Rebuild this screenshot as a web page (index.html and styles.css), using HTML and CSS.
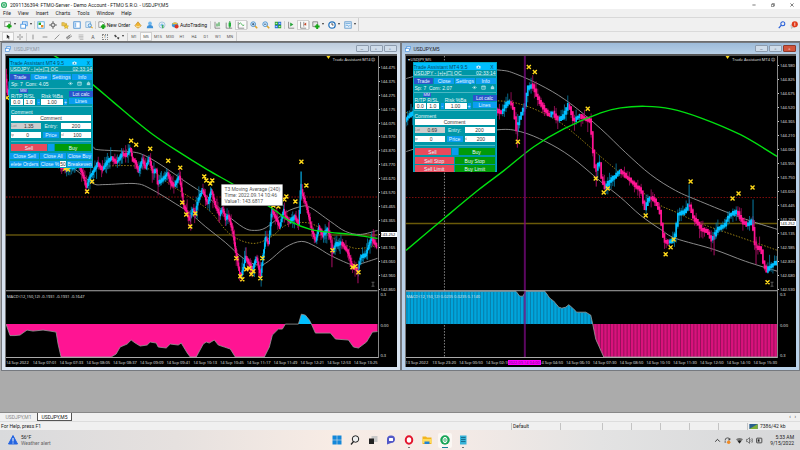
FILE: index.html
```html
<!DOCTYPE html>
<html lang="en">

<head>
    <meta charset="UTF-8">
    <meta name="viewport" content="width=device-width, initial-scale=1.0">
    <title>2091136394: FTMO-Server - Demo Account</title>
    <link rel="stylesheet" href="styles.css">
</head>

<body>
    <!-- shared icons -->
    <svg class="defs" width="0" height="0">
        <symbol id="i-win" viewBox="0 0 10 10"><rect x="3" y="1" width="6" height="5" fill="#dcecff" stroke="#3f8fe0"/><rect x="1" y="4" width="6" height="5" fill="#fff" stroke="#3f8fe0"/></symbol>
        <symbol id="i-bars" viewBox="0 0 10 10"><path d="M2.500 1v8H9" fill="none" stroke="#777"/><path d="M5 3v4M7.500 1.500v5" fill="none" stroke="#2a9b3a" stroke-width="1.300"/></symbol>
        <symbol id="i-cam" viewBox="0 0 10 8"><path d="M1 2h2l1-1h2l1 1h2v5H1z" fill="#dff4fb"/><circle cx="5" cy="4.500" r="1.500" fill="#1a87b0"/></symbol>
        <symbol id="i-eye" viewBox="0 0 10 8"><path d="M1 4q4-5 8 0q-4 5-8 0z" fill="none" stroke="#d9f3f6"/><circle cx="5" cy="4" r="1.300" fill="#d9f3f6"/></symbol>
        <symbol id="i-cal" viewBox="0 0 10 10"><path d="M1.500 2h7v6.500h-7zM1.500 3.500h7M5 6h2" fill="none" stroke="#d9f3f6" stroke-width="1.200"/></symbol>
        <symbol id="i-bell" viewBox="0 0 10 10"><path d="M1.500 7.500h7M2.500 7V4q2.500-4 5 0v3z" fill="#8fd3da" stroke="#d9f3f6"/></symbol>
    </svg>

    <header class="titlebar">
        <svg class="logo" viewBox="0 0 14 14"><circle cx="7" cy="7" r="7" fill="#12a150"/><path d="M7 2.500a4 4.500 0 1 0 .1 0M7 4.500v5" fill="none" stroke="#fff" stroke-width="1.600"/></svg>
        <span>2091136394: FTMO-Server - Demo Account - FTMO S.R.O. - USDJPY,M5</span>
        <div class="caption-buttons">
            <button aria-label="Minimize"><svg viewBox="0 0 10 10"><path d="M1 5h8" stroke="#222" stroke-width="1.500"/></svg></button>
            <button aria-label="Restore"><svg viewBox="0 0 10 10"><path d="M1 3.500h5.500V9H1zM3 3V1.500h5.500v6H7" fill="none" stroke="#222" stroke-width="1.200"/></svg></button>
            <button aria-label="Close"><svg viewBox="0 0 10 10"><path d="M1 1l8 8M9 1l-8 8" stroke="#222" stroke-width="1.400"/></svg></button>
        </div>
    </header>

    <nav class="menu">
        <button>File</button><button>View</button><button>Insert</button><button>Charts</button><button>Tools</button><button>Window</button><button>Help</button>
    </nav>

    <div class="toolbar">
        <button class="tool drop" aria-label="New chart"><svg viewBox="0 0 10 10"><rect x="1" y="1" width="7" height="6" fill="#fff" stroke="#888"/><path d="M6.500 3.500v6M3.500 6.500h6" stroke="#16a716" stroke-width="2.500"/></svg></button>
        <button class="tool drop" aria-label="Profiles"><svg><use href="#i-win"/></svg></button>
        <i class="sep"></i>
        <button class="tool" aria-label="Market watch"><svg viewBox="0 0 10 10"><rect x="1" y="1" width="8" height="8" fill="#fff" stroke="#4aa3e0"/><path d="M2 2h3v3H2z" fill="#1fa52a"/><path d="M5 5h3v3H5z" fill="#e88923"/></svg></button>
        <button class="tool" aria-label="Data window"><svg viewBox="0 0 10 10"><circle cx="5" cy="5" r="2.500" fill="none" stroke="#555"/><path d="M5 0v4M5 6v4M0 5h4M6 5h4" stroke="#555"/></svg></button>
        <button class="tool" aria-label="Navigator"><svg viewBox="0 0 10 10"><path d="M1 2h3l1 1h2v3H1z" fill="#ecc44c" stroke="#b58a1a" stroke-width=".5"/><path d="M6.500 4l1 2 2 .2-1.500 1.300.4 2-1.900-1-1.900 1 .4-2L3.500 6.200l2-.2z" fill="#f5cd33" stroke="#b58a1a" stroke-width=".5"/></svg></button>
        <button class="tool" aria-label="Terminal"><svg viewBox="0 0 10 10"><rect x="1" y="1" width="8" height="8" fill="#fff" stroke="#3583cf"/><path d="M2 2h2v6H2z" fill="#8bbdf0"/></svg></button>
        <button class="tool" aria-label="Strategy tester"><svg viewBox="0 0 10 10"><path d="M1 1h6v7H1z" fill="#e9f3fc" stroke="#79a9d3"/><circle cx="6" cy="5.500" r="2" fill="#d8edff" stroke="#3a87c8"/><path d="M7.500 7L9.500 9" stroke="#e0a52a" stroke-width="1.500"/></svg></button>
        <i class="sep"></i>
        <button class="tool text new-order"><svg viewBox="0 0 10 10"><path d="M1 1h5l2 2v5H1z" fill="#fff" stroke="#888"/><path d="M6.500 4v6M3.500 7h6" stroke="#16a716" stroke-width="2.500"/></svg>New Order</button>
        <button class="tool" aria-label="MetaEditor"><svg viewBox="0 0 10 10"><path d="M1 6l4-5 4 5-4 3z" fill="#f2b632" stroke="#b67b12" stroke-width=".7"/><path d="M2 6l3 1.500L8 6" fill="none" stroke="#fff3c0"/></svg></button>
        <button class="tool" aria-label="Login"><svg viewBox="0 0 10 10"><circle cx="5" cy="3" r="2.300" fill="#6cb6ee"/><path d="M1 9q0-4 4-4t4 4z" fill="#3d90d8"/></svg></button>
        <button class="tool" aria-label="Signals"><svg viewBox="0 0 10 10"><circle cx="5" cy="5" r="3.800" fill="none" stroke="#93bde0"/><circle cx="5" cy="5" r="2" fill="#7fc2ea"/><path d="M6 5v4" stroke="#2ba640" stroke-width="1.500"/></svg></button>
        <button class="tool text auto"><svg viewBox="0 0 10 10"><ellipse cx="5" cy="5" rx="4" ry="3" fill="#3c97dd"/><path d="M1 4q4-5 8 0z" fill="#f0bf35"/><circle cx="7" cy="7" r="2.500" fill="#dd3322"/></svg>AutoTrading</button>
        <i class="sep"></i>
        <button class="tool" aria-label="Bar chart"><svg><use href="#i-bars"/></svg></button>
        <button class="tool" aria-label="Candlesticks"><svg viewBox="0 0 10 10"><path d="M1.500 2v7H9" fill="none" stroke="#777"/><path d="M6 0v9" stroke="#128a22"/><path d="M4.500 2h3v5h-3z" fill="#20b038"/></svg></button>
        <button class="tool on" aria-label="Line chart"><svg viewBox="0 0 10 10"><path d="M1.500 1v8H9" fill="none" stroke="#777"/><path d="M2 4q3-3 4 0t3 1" fill="none" stroke="#29a53a"/></svg></button>
        <i class="sep"></i>
        <button class="tool" aria-label="Zoom in"><svg viewBox="0 0 10 10"><path d="M6 6l3 3" stroke="#e0a52a" stroke-width="2"/><circle cx="4" cy="4" r="3" fill="#d8edff" stroke="#3a87c8"/><path d="M2.500 4h3M4 2.500v3" stroke="#224466"/></svg></button>
        <button class="tool" aria-label="Zoom out"><svg viewBox="0 0 10 10"><path d="M6 6l3 3" stroke="#e0a52a" stroke-width="2"/><circle cx="4" cy="4" r="3" fill="#d8edff" stroke="#3a87c8"/><path d="M2.500 4h3" stroke="#224466"/></svg></button>
        <button class="tool" aria-label="Tile windows"><svg viewBox="0 0 10 10"><path d="M1 1h4v4H1zM5 5h4v4H5z" fill="#31a836"/><path d="M5 1h4v4H5zM1 5h4v4H1z" fill="#2c72d8"/><path d="M2 3h2M6 3h2M2 7h2M6 7h2" stroke="#fff"/></svg></button>
        <i class="sep"></i>
        <button class="tool" aria-label="Auto scroll"><svg viewBox="0 0 10 10"><path d="M2 1v8h7" fill="none" stroke="#777"/><path d="M4 2l4 2.500L4 7z" fill="#27a33a"/></svg></button>
        <button class="tool on" aria-label="Chart shift"><svg viewBox="0 0 10 10"><path d="M2 1v8h7M6 1v6" fill="none" stroke="#777"/><path d="M9 2v4L6 4z" fill="#c94a2a"/></svg></button>
        <i class="sep"></i>
        <button class="tool drop" aria-label="Indicators"><svg viewBox="0 0 10 10"><path d="M1 1h6v6H1z" fill="#e8e8e8" stroke="#777"/><path d="M6.500 4v6M3.500 7h6" stroke="#16a716" stroke-width="2.500"/></svg></button>
        <button class="tool drop" aria-label="Periods"><svg viewBox="0 0 10 10"><circle cx="5" cy="5" r="4" fill="#fff" stroke="#2774bd" stroke-width="1.600"/><path d="M5 2.500V5h2" fill="none" stroke="#333"/></svg></button>
        <button class="tool drop" aria-label="Templates"><svg viewBox="0 0 10 10"><rect x="1" y="1" width="8" height="8" fill="#e5f1fc" stroke="#5793c9"/><path d="M2 3h6M2 6q2-2 3 0t3-1" fill="none" stroke="#5a9fd8"/></svg></button>
        <i class="edge"></i>
        <div class="right-tools">
            <button class="tool" aria-label="Search"><svg viewBox="0 0 10 10"><circle cx="6" cy="3.500" r="2.500" fill="none" stroke="#2b62d9" stroke-width="1.300"/><path d="M4 5.500L1 9" stroke="#2b62d9" stroke-width="1.600"/></svg></button>
            <button class="tool" aria-label="Notifications"><svg viewBox="0 0 10 10"><path d="M1 5h5v3H3L2 9.500z" fill="#ddd" stroke="#999" stroke-width=".5"/><circle cx="6" cy="4" r="3.800" fill="#e03a1a"/><path d="M6 2v4" stroke="#fff"/></svg></button>
        </div>
    </div>

    <div class="toolbar lines">
        <button class="tool on" aria-label="Cursor"><svg viewBox="0 0 10 10"><path d="M3 1v7l2-2 1.500 3 1-.5L6 5.500h2.500z" fill="#222"/></svg></button>
        <button class="tool" aria-label="Crosshair"><svg viewBox="0 0 10 10"><path d="M5 0v4M5 6v4M0 5h4M6 5h4" stroke="#555"/></svg></button>
        <i class="sep"></i>
        <button class="tool" aria-label="Vertical line"><svg viewBox="0 0 10 10"><path d="M5 1v8" stroke="#555"/></svg></button>
        <button class="tool" aria-label="Horizontal line"><svg viewBox="0 0 10 10"><path d="M1 5h8" stroke="#555"/></svg></button>
        <button class="tool" aria-label="Trendline"><svg viewBox="0 0 10 10"><path d="M1 9l8-8" stroke="#555"/></svg></button>
        <button class="tool" aria-label="Channel"><svg viewBox="0 0 10 10"><path d="M0 7l8-6M2 9l8-6M2 4v4M5 2v5" stroke="#555"/></svg></button>
        <button class="tool" aria-label="Fibonacci"><svg viewBox="0 0 10 10"><path d="M1 1.500h8M1 4h8M1 6.500h8M3 9h6" stroke="#888" stroke-width=".8"/></svg></button>
        <button class="tool glyph letter">A</button>
        <button class="tool glyph"><span class="boxed">T</span></button>
        <button class="tool drop" aria-label="Arrows"><svg viewBox="0 0 10 10"><path d="M2 1l3 3-2 2-3-3zM6 5l3 1-1 3-3-2z" fill="#444"/></svg></button>
        <i class="sep"></i>
        <button class="tool glyph">M1</button><button class="tool glyph on">M5</button><button class="tool glyph">M15</button><button class="tool glyph">M30</button><button class="tool glyph">H1</button><button class="tool glyph">H4</button><button class="tool glyph">D1</button><button class="tool glyph">W1</button><button class="tool glyph">MN</button>
        <i class="edge"></i>
    </div>

    <main class="desk">
        <section class="window">
            <div class="window-title">
                <svg><use href="#i-win"/></svg><span>USDJPY,M1</span>
                <div class="window-buttons"><button aria-label="Minimize">–</button><button aria-label="Restore">▫</button><button aria-label="Close">▫</button></div>
            </div>
            <div class="chart">
                <div class="plot">
                    <svg id="chart-m1" viewBox="6 56 371 302" preserveAspectRatio="none"></svg>
                    <span class="expert">Trade Assistant MT4 ☹</span>
                    <span class="macd-label">MACD (12,150,12) -0.1931 -0.1931 -0.1647</span>
                    <form class="panel">
                        <div class="panel-title"><span>Trade Assistant MT4 9.5</span><svg><use href="#i-cam"/></svg><b>X</b></div>
                        <div class="panel-symbol"><span>USDJPY - |+|+|☐| OC</span><b>02:33:14</b></div>
                        <div class="tabs"><button type="button" class="on">Trade</button><button type="button">Close</button><button type="button">Settings</button><button type="button">Info</button></div>
                        <div class="spread"><span>Sp: 7&nbsp; Com: 4.05</span><svg><use href="#i-eye"/></svg><svg><use href="#i-cal"/></svg><svg><use href="#i-bell"/></svg></div>
                        <div class="risk">
                            <div class="mm"><span class="mm-tag">MM</span><label>R/TP<input value="0.0"></label><label>R/SL<input value="1.0"></label></div>
                            <div class="percent"><label for="risk1">Risk %Ba</label><div><button type="button">-</button><input id="risk1" value="1.00"><button type="button">+</button></div></div>
                            <div class="calc"><button type="button" class="on">Lot calc</button><button type="button">Lines</button></div>
                        </div>
                        <div class="comment"><label for="com1">Comment</label><input id="com1" value="Comment"></div>
                        <div class="order">
                            <label class="field grey"><small>Lot</small><input value="1.35"></label><span>Entry:</span><label class="field"><input value="200" aria-label="Entry"></label>
                            <label class="field"><small>tp</small><input value="0"></label><button type="button">Price</button><label class="field"><small>sl</small><input value="100"></label>
                        </div>
                        <div class="deal"><button type="button" class="sell">Sell</button><button type="button" class="mini" aria-label="Lock"></button><button type="button" class="buy">Buy</button></div>
                        <div class="close-grid">
                            <button type="button">Close Sell</button><button type="button">Close All</button><button type="button">Close Buy</button>
                            <button type="button">elete Orders</button><div class="close-part"><button type="button">Close %</button><input value="50" aria-label="Close percent"></div><button type="button">Breakeven</button>
                        </div>
                    </form>
                    <div class="tooltip">T3 Moving Average (240)<br>Time: 2022.09.14 10:46<br>Value1: 143.6817</div>
                </div>
                <div class="scale">
                    <div class="prices m1">
                        <span>144.475</span><span>144.375</span><span>144.275</span><span>144.175</span><span>144.075</span><span>143.970</span><span>143.870</span><span>143.770</span><span>143.670</span><span>143.570</span><span>143.465</span><span>143.365</span><span class="bid">143.252</span><span>143.165</span><span>143.060</span><span>142.960</span><span>142.860</span>
                    </div>
                    <div class="macd-scale"><span>0.3</span><span>0.00</span><span>0.3</span></div>
                </div>
                <div class="times">
                    <span>14 Sep 2022</span><span>14 Sep 07:01</span><span>14 Sep 07:33</span><span>14 Sep 08:05</span><span>14 Sep 08:37</span><span>14 Sep 09:09</span><span>14 Sep 09:41</span><span>14 Sep 10:13</span><span>14 Sep 10:45</span><span>14 Sep 11:17</span><span>14 Sep 11:49</span><span>14 Sep 12:21</span><span>14 Sep 12:53</span><span>14 Sep 13:25</span>
                </div>
            </div>
        </section>

        <section class="window active">
            <div class="window-title">
                <svg><use href="#i-win"/></svg><span>USDJPY,M5</span>
                <div class="window-buttons"><button aria-label="Minimize">–</button><button aria-label="Restore">▫</button><button class="close" aria-label="Close">▫</button></div>
            </div>
            <div class="chart">
                <div class="plot">
                    <svg id="chart-m5" viewBox="405 56 372 302" preserveAspectRatio="none"></svg>
                    <span class="symbol">▾ USDJPY,M5</span>
                    <span class="expert">Trade Assistant MT4 ☹</span>
                    <span class="macd-label">MACD (12,150,12) 0.0235 0.0235 0.1140</span>
                    <form class="panel low">
                        <div class="panel-title"><span>Trade Assistant MT4 9.5</span><svg><use href="#i-cam"/></svg><b>X</b></div>
                        <div class="panel-symbol"><span>USDJPY - |+|+|☐| OC</span><b>02:33:14</b></div>
                        <div class="tabs"><button type="button" class="on">Trade</button><button type="button">Close</button><button type="button">Settings</button><button type="button">Info</button></div>
                        <div class="spread"><span>Sp: 7&nbsp; Com: 2.07</span><svg><use href="#i-eye"/></svg><svg><use href="#i-cal"/></svg><svg><use href="#i-bell"/></svg></div>
                        <div class="risk">
                            <div class="mm"><span class="mm-tag">MM</span><label>R/TP<input value="0.0"></label><label>R/SL<input value="1.0"></label></div>
                            <div class="percent"><label for="risk2">Risk %Ba</label><div><button type="button">-</button><input id="risk2" value="1.00"><button type="button">+</button></div></div>
                            <div class="calc"><button type="button" class="on">Lot calc</button><button type="button">Lines</button></div>
                        </div>
                        <div class="comment"><label for="com2">Comment</label><input id="com2" value="Comment"></div>
                        <div class="order">
                            <label class="field grey"><small>Lot</small><input value="0.69"></label><span>Entry:</span><label class="field"><input value="200" aria-label="Entry"></label>
                            <label class="field"><small>tp</small><input value="0"></label><button type="button">Price</button><label class="field"><small>sl</small><input value="200"></label>
                        </div>
                        <div class="deal"><button type="button" class="sell">Sell</button><button type="button" class="mini" aria-label="Lock"></button><button type="button" class="buy">Buy</button></div>
                        <div class="pending">
                            <button type="button" class="sell">Sell Stop</button><button type="button" class="buy">Buy Stop</button>
                            <button type="button" class="sell">Sell Limit</button><button type="button" class="buy">Buy Limit</button>
                        </div>
                    </form>
                </div>
                <div class="scale">
                    <div class="prices m5">
                        <span>144.980</span><span>144.825</span><span>144.675</span><span>144.520</span><span>144.365</span><span>144.210</span><span>144.060</span><span>143.905</span><span>143.750</span><span>143.600</span><span>143.445</span><span>143.290<em class="bid">143.252</em></span><span>143.135</span><span>142.985</span><span>142.830</span><span>142.680</span><span>142.530</span>
                    </div>
                    <div class="macd-scale"><span>0.3</span><span>0.00</span><span>0.3</span></div>
                </div>
                <div class="times">
                    <span>13 Sep 2022</span><span>13 Sep 23:20</span><span>14 Sep 00:50</span><span>14 Sep 02:10</span><span class="mark"><em>2022.09.14 04:00</em></span><span>14 Sep 04:50</span><span>14 Sep 06:10</span><span>14 Sep 07:30</span><span>14 Sep 08:50</span><span>14 Sep 10:10</span><span>14 Sep 11:30</span><span>14 Sep 12:50</span><span>14 Sep 14:10</span><span>14 Sep 15:30</span>
                </div>
            </div>
        </section>
    </main>

    <div class="chart-tabs"><button>USDJPY,M1</button><button class="on">USDJPY,M5</button><span>‹ &nbsp; ›</span></div>

    <footer class="status">
        <span class="help">For Help, press F1</span>
        <span class="cell profile">Default</span><span class="cell date"></span><span class="cell"></span><span class="cell"></span><span class="cell"></span><span class="cell"></span><span class="cell"></span>
        <span class="cell net"><svg viewBox="0 0 20 12"><path d="M0 0h20v12H0z" fill="#2a5f8e"/><path d="M0 12L20 0v12z" fill="#7fae3a"/></svg>7386/42 kb</span>
    </footer>

    <div class="taskbar">
        <div class="weather">
            <svg viewBox="0 0 20 20"><path d="M10 1l9 17H1z" fill="#2464e0" stroke="#2464e0" stroke-linejoin="round" stroke-width="2"/><path d="M10 6v7M10 15v2" stroke="#fff" stroke-width="2"/></svg>
            <div>56°F<br><small>Weather alert</small></div>
        </div>
        <div class="apps">
            <button aria-label="Start"><svg viewBox="0 0 20 20"><path d="M1 1h8.500v8.500H1zM10.500 1H19v8.500h-8.500zM1 10.500h8.500V19H1zM10.500 10.500H19V19h-8.500z" fill="#1487d9"/></svg></button>
            <button aria-label="Search"><svg viewBox="0 0 20 20"><circle cx="11" cy="8" r="6.500" fill="#eee" stroke="#222" stroke-width="2"/><path d="M7 13l-5 6" stroke="#222" stroke-width="2.500"/></svg></button>
            <button aria-label="Task view"><svg viewBox="0 0 20 20"><path d="M7 2h12v12H7z" fill="#c8c8c8"/><path d="M2 7h10v11H2z" fill="#222"/></svg></button>
            <button aria-label="Chat"><svg viewBox="0 0 20 20"><path d="M2 19V8a8 7.500 0 1 1 8 8z" fill="#5258c8"/><rect x="6" y="6" width="8" height="6" rx="1" fill="#fff"/></svg></button>
            <button aria-label="Opera" class="open"><svg viewBox="0 0 20 20"><ellipse cx="10" cy="10" rx="6.500" ry="7.500" fill="#fff" stroke="#e3142c" stroke-width="4"/></svg></button>
            <button aria-label="Files"><svg viewBox="0 0 20 20"><path d="M1 3h7l2 2h9v13H1z" fill="#f3b51c"/><path d="M1 8h18v8H1z" fill="#ffdc5c"/><path d="M5 13h10v5H5z" fill="#2082d4"/></svg></button>
            <button aria-label="MetaTrader" class="open current"><svg viewBox="0 0 20 20"><circle cx="10" cy="10" r="9.500" fill="#16a556"/><ellipse cx="10" cy="10" rx="4" ry="5.500" fill="none" stroke="#fff" stroke-width="2"/><path d="M10 6v8" stroke="#fff" stroke-width="2"/></svg></button>
            <button aria-label="Notepad" class="open"><svg viewBox="0 0 20 20"><path d="M4 1h13v18H4z" fill="#36b3d8"/><path d="M6 5h9M6 9h9M6 13h9" stroke="#125a78" stroke-width="1.500"/></svg></button>
        </div>
        <div class="tray">
            <svg viewBox="0 0 12 12"><path d="M2 8l4-4 4 4" fill="none" stroke="#222" stroke-width="1.500"/></svg>
            <svg viewBox="0 0 12 12"><path d="M2 6a4 4 0 0 1 8-1M10 2v3H7M2 10V7" fill="none" stroke="#333" stroke-width="1.300"/><circle cx="8" cy="9" r="3" fill="#f08a24"/></svg>
            <svg class="apart" viewBox="0 0 12 12"><path d="M0 4q6-5 12 0L6 11z" fill="#777"/><path d="M3 7q3-2 6 0L6 11z" fill="#222"/></svg>
            <svg viewBox="0 0 12 12"><path d="M1 4h2l3-3v10L3 8H1zM8 4q2 2 0 4M10 2q3 4 0 8" fill="none" stroke="#333"/></svg>
            <svg viewBox="0 0 12 12"><rect x="1" y="2" width="9" height="8" rx="1" fill="none" stroke="#222" stroke-width="1.300"/><path d="M3 4h3v4H3z" fill="#222"/></svg>
            <div class="clock">5:33 AM<br>9/15/2022</div>
        </div>
    </div>

    <script src="charts.js"></script>
</body>

</html>
```

FILE: styles.css
```css
* {
    box-sizing: border-box;
}

body {
    margin: 0;
    height: 100vh;
    display: flex;
    flex-direction: column;
    overflow: hidden;
    background: #f0f0f0;
    color: #222;
    font: 5px/6px Roboto, "Open Sans", sans-serif;
}

button,
input {
    margin: 0;
    padding: 0;
    border: 0;
    background: none;
    color: inherit;
    font: inherit;
    min-width: 0;
}

.defs {
    position: absolute;
}

/* title and menu */
.titlebar {
    flex: 0 0 9px;
    display: flex;
    align-items: center;
    gap: 3px;
    padding: 0 6px 0 1px;
    background: #fff;
}

.logo {
    width: 6px;
    height: 6px;
}

.caption-buttons {
    margin-left: auto;
    display: flex;
    gap: 15px;
}

.caption-buttons svg {
    width: 4px;
    height: 4px;
    display: block;
}

.menu {
    flex: 0 0 9px;
    display: flex;
    align-items: center;
    gap: 7px;
    padding-left: 3px;
    border-bottom: 1px solid #d8d8d8;
}

/* toolbars */
.toolbar {
    flex: 0 0 13px;
    display: flex;
    align-items: center;
    padding-left: 2px;
}

.toolbar.lines {
    flex-basis: 10px;
    border-top: 1px solid #dadada;
}

.tool {
    width: 12px;
    height: 10px;
    display: flex;
    align-items: center;
    justify-content: center;
    flex: none;
}

.lines .tool {
    height: 9px;
}

.tool svg {
    width: 8px;
    height: 8px;
    flex: none;
}

.lines .tool svg {
    width: 6px;
    height: 6px;
}

.tool.on {
    background: #fafafa;
    border: 1px solid #d0d0d0;
}

.tool.drop {
    width: 16px;
}

.tool.drop::after {
    content: "";
    margin-left: 2px;
    border: 1px solid transparent;
    border-top: 2px solid #333;
}

.tool.text {
    gap: 1px;
    color: #111;
}

.tool.new-order {
    width: 36px;
}

.tool.auto {
    width: 42px;
}

.tool.glyph {
    color: #555;
    font-size: 4px;
}

.tool.letter {
    font-size: 5px;
}

.boxed {
    border: 1px dotted #888;
    padding: 0 1px;
    line-height: 4px;
}

.sep {
    width: 1px;
    height: 8px;
    background: #cfcfcf;
}

.edge {
    width: 1px;
    align-self: stretch;
    background: #cfcfcf;
}

.right-tools {
    margin-left: auto;
    display: flex;
}

/* chart windows */
.desk {
    flex: 1;
    min-height: 0;
    display: flex;
    gap: 2px;
    padding: 1px 1px 42px 2px;
    background: #ababab;
    border-top: 1px solid #6e6e6e;
}

.window {
    flex: 1;
    min-width: 0;
    display: flex;
    flex-direction: column;
    padding: 0 3px 3px;
    background: #d9e4f1;
    outline: 1px solid #75797f;
}

.window.active {
    background: #bad2ea;
}

.window-title {
    flex: 0 0 11px;
    display: flex;
    align-items: center;
    gap: 3px;
    margin: 0 -3px;
    padding: 0 3px;
    background: linear-gradient(#bccbdc, #d5e1ee);
    color: #8b95a2;
}

.active .window-title {
    background: linear-gradient(#9dbbd9, #b7cfe7);
    color: #222;
}

.window-title svg {
    width: 6px;
    height: 6px;
}

.window-buttons {
    margin-left: auto;
    display: flex;
    gap: 1px;
}

.window-buttons button {
    width: 13px;
    height: 7px;
    border: 1px solid #8d9cae;
    border-radius: 1px;
    background: #cfdcea;
    color: #5f6b78;
    line-height: 4px;
}

.window-buttons .close {
    background: #d2543c;
    border-color: #8f3a2c;
    color: #fff;
}

.chart {
    flex: 1;
    min-height: 0;
    display: grid;
    grid-template-columns: 1fr 19px;
    grid-template-rows: 1fr 9px;
    background: #000;
    border-top: 2px solid #555;
    border-left: 1px solid #777;
    color: #e4e4e4;
    font: 4px/5px "Open Sans", "Noto Sans", sans-serif;
}

.plot {
    position: relative;
    min-width: 0;
    min-height: 0;
    border-bottom: 1px solid #aaa;
}

.plot > svg {
    position: absolute;
    width: 100%;
    height: 100%;
}

.expert,
.symbol,
.macd-label {
    position: absolute;
    top: 1px;
    white-space: nowrap;
}

.expert {
    right: 2px;
}

.symbol {
    left: 2px;
}

.macd-label {
    top: 79%;
    left: 1px;
}

.scale {
    border-left: 1px solid #888;
    display: grid;
    grid-template-rows: 236px 1fr;
    min-height: 0;
}

.prices {
    display: flex;
    flex-direction: column;
    justify-content: space-between;
    padding: 9px 0 0 2px;
}

.prices.m5 {
    padding-top: 7px;
}

.prices span {
    position: relative;
}

.prices span::before {
    content: "";
    position: absolute;
    left: -2px;
    top: 2px;
    width: 1px;
    height: 1px;
    background: #ccc;
}

.prices .bid {
    background: #fff;
    color: #000;
    font-style: normal;
}

.prices em {
    position: absolute;
    left: 0;
    top: 4px;
    width: 100%;
}

.macd-scale {
    display: flex;
    flex-direction: column;
    justify-content: space-between;
    padding-left: 2px;
}

.times {
    grid-column: 1 / 3;
    display: grid;
    grid-template-columns: repeat(14, 1fr);
    padding: 2px 16px 0 0;
    white-space: nowrap;
}

.times span {
    min-width: 0;
}

.mark {
    position: relative;
}

.mark em {
    position: absolute;
    left: -5px;
    width: 33px;
    background: #f0f;
    color: #60106a;
    font-style: normal;
    text-align: center;
}

.tooltip {
    position: absolute;
    left: 58%;
    top: 128px;
    padding: 1px 2px;
    background: #fff;
    border: 1px solid #999;
    border-radius: 1px;
    color: #555;
    font: 5px/6px Roboto, sans-serif;
    white-space: nowrap;
}

/* trade assistant */
.panel {
    position: absolute;
    left: 3px;
    top: 2px;
    width: 84px;
    height: 110px;
    background: #0097a7;
    border: 1px solid #00a9c4;
    color: #e2f7f9;
    font: 5px/6px "Liberation Sans", Arial, sans-serif;
    text-align: center;
}

.panel.low {
    left: 7px;
    top: 6px;
}

.panel button {
    background: #0a9df0;
    color: #e6f7ff;
    height: 6px;
    line-height: 6px;
    white-space: nowrap;
}

.panel button.on {
    background: #2a54cc;
}

.panel input {
    width: 100%;
    height: 6px;
    background: #fff;
    color: #333;
    text-align: center;
}

.panel-title,
.panel-symbol {
    display: flex;
    align-items: center;
    justify-content: space-between;
    height: 7px;
    white-space: nowrap;
}

.panel-title {
    background: #00bfff;
    color: #0b4960;
    padding-right: 2px;
}

.panel-title span {
    width: 53px;
    text-align: left;
}

.panel-title b,
.panel-symbol b {
    font-weight: normal;
}

.panel-title svg {
    width: 5px;
    height: 4px;
}

.panel-symbol {
    height: 6px;
    border-bottom: 1px solid #4bb8c4;
}

.tabs {
    display: grid;
    grid-template-columns: repeat(4, 1fr);
    gap: 1px;
    margin-top: 2px;
}

.spread {
    display: flex;
    gap: 4px;
    margin: 1px 1px 0;
    height: 6px;
}

.spread span {
    margin-right: auto;
}

.spread svg {
    width: 5px;
    height: 5px;
}

.risk {
    display: grid;
    grid-template-columns: 24px 30px 24px;
    gap: 2px;
    margin-top: 1px;
    padding: 1px;
    height: 19px;
    border-top: 1px solid #4bb8c4;
    border-bottom: 1px solid #4bb8c4;
}

.mm {
    position: relative;
    display: grid;
    grid-template-columns: 1fr 1fr;
    gap: 1px;
    padding-top: 3px;
}

.mm-tag {
    position: absolute;
    top: -1px;
    left: 8px;
    background: #2a54cc;
    font-size: 4px;
    line-height: 4px;
    padding: 0 1px;
}

.mm label {
    display: flex;
    flex-direction: column;
}

.percent {
    padding-top: 3px;
    display: flex;
    flex-direction: column;
}

.percent div {
    display: grid;
    grid-template-columns: 3px 1fr 3px;
    gap: 1px;
}

.calc {
    display: grid;
    align-content: start;
    gap: 1px;
    padding-top: 1px;
}

.comment {
    display: grid;
    margin: 2px 1px;
    text-align: left;
}

.order {
    display: grid;
    grid-template-columns: 30px 16px 30px;
    justify-content: space-between;
    row-gap: 3px;
    margin: 0 1px;
    padding: 0 0 3px;
    border-bottom: 1px solid #4bb8c4;
}

.field {
    display: flex;
    background: #fff;
}

.field small {
    color: #888;
    font-size: 4px;
}

.grey,
.panel .grey input {
    background: #ccc;
}

.deal {
    display: grid;
    grid-template-columns: 36px 6px 36px;
    justify-content: space-between;
    margin: 2px 1px 0;
}

.panel .deal button,
.panel .pending button {
    height: 7px;
}

.panel .sell {
    background: #e84a5c;
}

.panel .buy {
    background: #009b0a;
}

.close-grid {
    display: grid;
    grid-template-columns: 29px 1fr 25px;
    gap: 2px 1px;
    margin: 2px 0 0;
}

.close-part {
    display: grid;
    grid-template-columns: 1fr 6px;
}

.pending {
    display: grid;
    grid-template-columns: 1fr 1fr;
    gap: 1px;
    margin: 2px 1px 0;
}

/* bottom bars */
.chart-tabs {
    flex: 0 0 9px;
    display: flex;
    align-items: stretch;
    border-top: 1px solid #888;
}

.chart-tabs button {
    width: 37px;
    color: #888;
}

.chart-tabs .on {
    width: 35px;
    background: #fff;
    border: 1px solid #555;
    border-top: 0;
    color: #111;
}

.chart-tabs span {
    margin-left: auto;
    padding-right: 4px;
}

.status {
    flex: 0 0 9px;
    display: flex;
    align-items: center;
    border-top: 1px solid #ddd;
}

.help {
    margin-right: auto;
    padding-left: 1px;
}

.cell {
    width: 29px;
    height: 7px;
    border-left: 1px solid #c4c4c4;
    padding-left: 1px;
}

.cell.profile {
    width: 49px;
}

.cell.date {
    width: 42px;
}

.cell.net {
    width: 53px;
    display: flex;
    align-items: center;
    gap: 2px;
}

.net svg {
    width: 9px;
    height: 5px;
}

.taskbar {
    flex: 0 0 20px;
    display: grid;
    grid-template-columns: 1fr auto 1fr;
    align-items: center;
    background: linear-gradient(90deg, #d9dadc, #e6e1df 22%, #f8ece5 42%, #f3eae6 58%, #e3e3e3 75%, #d6d7d9);
}

.weather {
    display: flex;
    align-items: center;
    gap: 3px;
    padding-left: 8px;
}

.weather svg {
    width: 10px;
    height: 10px;
}

.weather small {
    color: #666;
    font-size: 5px;
}

.apps {
    display: flex;
    gap: 4px;
}

.apps button {
    position: relative;
    width: 14px;
    height: 15px;
    display: grid;
    place-items: center;
}

.apps svg {
    width: 10px;
    height: 10px;
}

.apps .current {
    background: #fbf7f4;
    border-radius: 2px;
}

.apps .open::after {
    content: "";
    position: absolute;
    bottom: 0;
    width: 2px;
    height: 1px;
    background: #777;
}

.apps .current::after {
    width: 6px;
    background: #16809a;
}

.tray {
    display: flex;
    align-items: center;
    justify-content: flex-end;
    gap: 3px;
    padding-right: 6px;
}

.tray svg {
    width: 7px;
    height: 7px;
}

.tray .apart {
    margin-left: 2px;
}

.clock {
    margin-left: 4px;
    text-align: right;
}
```

FILE: charts.js
```js
var NS = 'http://www.w3.org/2000/svg';
var UP = '#00bfff';
var DOWN = '#ff1493';

function add(svg, tag, attrs) {
    var el = document.createElementNS(NS, tag);
    for (var key in attrs) {
        el.setAttribute(key, attrs[key]);
    }
    svg.appendChild(el);
}

// smooth curve through the points
function curve(svg, pts, color, width, dash) {
    var d = 'M' + pts[0];
    for (var i = 0; i < pts.length - 1; i++) {
        var p0 = pts[i - 1] || pts[i];
        var p1 = pts[i];
        var p2 = pts[i + 1];
        var p3 = pts[i + 2] || p2;
        d += 'C' + (p1[0] + (p2[0] - p0[0]) / 6) + ',' + (p1[1] + (p2[1] - p0[1]) / 6) + ' ' +
            (p2[0] - (p3[0] - p1[0]) / 6) + ',' + (p2[1] - (p3[1] - p1[1]) / 6) + ' ' + p2;
    }
    add(svg, 'path', { d: d, fill: 'none', stroke: color, 'stroke-width': width, 'stroke-dasharray': dash || 'none' });
}

function hline(svg, x1, x2, y, color, width, dash) {
    add(svg, 'path', { d: 'M' + x1 + ' ' + y + 'H' + x2, stroke: color, 'stroke-width': width, 'stroke-dasharray': dash || 'none' });
}

function valueAt(pts, x) {
    for (var i = 1; i < pts.length; i++) {
        if (x <= pts[i][0]) {
            var t = (x - pts[i - 1][0]) / (pts[i][0] - pts[i - 1][0]);
            return pts[i - 1][1] + t * (pts[i][1] - pts[i - 1][1]);
        }
    }
    return pts[pts.length - 1][1];
}

function candles(svg, pts, step, width) {
    var seed = 7;
    function rnd() {
        seed = (seed * 16807) % 2147483647;
        return seed / 2147483647;
    }
    var paths = { upWick: '', downWick: '', up: '', down: '' };
    for (var x = pts[0][0]; x < pts[pts.length - 1][0]; x += step) {
        var a = valueAt(pts, x);
        var b = valueAt(pts, x + step);
        var dir = b <= a ? 'up' : 'down';
        var top = Math.min(a, b) - 1 - rnd() * 1.5;
        var bottom = Math.max(a, b) + 1 + rnd() * 1.5;
        paths[dir] += 'M' + x + ' ' + top + 'V' + bottom;
        paths[dir + 'Wick'] += 'M' + x + ' ' + (top - rnd() * rnd() * 11) + 'V' + (bottom + rnd() * rnd() * 11);
    }
    add(svg, 'path', { d: paths.upWick, stroke: '#087fa8', 'stroke-width': 0.8 });
    add(svg, 'path', { d: paths.downWick, stroke: '#ad0e66', 'stroke-width': 0.8 });
    add(svg, 'path', { d: paths.up, stroke: UP, 'stroke-width': width });
    add(svg, 'path', { d: paths.down, stroke: DOWN, 'stroke-width': width });
}

function crosses(svg, pts) {
    var d = '';
    pts.forEach(function (p) {
        d += 'M' + (p[0] - 2) + ' ' + (p[1] - 2) + 'l4 4m0 -4l-4 4';
    });
    add(svg, 'path', { d: d, stroke: '#ffd91a', 'stroke-width': 1.4 });
}

function area(svg, pts, color) {
    add(svg, 'path', { d: 'M' + pts[0][0] + ' 325L' + pts.join('L') + 'L' + pts[pts.length - 1][0] + ' 325z', fill: color });
}

// USDJPY M1
var m1 = document.getElementById('chart-m1');
hline(m1, 6, 377, 197.5, '#c01010', 0.8, '1.5 1.5');
hline(m1, 6, 377, 235.5, '#8f7a12', 1);
curve(m1, [[60, 160], [78, 172], [93, 184], [105, 185], [135, 184], [150, 189], [175, 204], [190, 214], [205, 227], [225, 243], [243, 259], [258, 266], [268, 262], [285, 248], [301, 242], [315, 247], [330, 256], [350, 265], [358, 265], [377, 259]], '#999', 0.9);
curve(m1, [[85, 140], [93, 147], [98, 150], [130, 152], [145, 156], [165, 168], [185, 182], [207, 197], [225, 214], [243, 228], [254, 231], [266, 228], [285, 213], [301, 207], [310, 208], [330, 222], [345, 232], [360, 235], [377, 231]], '#999', 0.9);
curve(m1, [[94, 167], [130, 166], [150, 170], [170, 185], [190, 198], [210, 212], [230, 235], [252, 244], [270, 238], [285, 226], [301, 223], [315, 226], [335, 240], [355, 249], [377, 246]], '#a58a14', 0.9, '1.5 1.5');
candles(m1, [[6, 70], [8, 95], [12, 85], [60, 166], [66, 169], [80, 166], [85, 180], [87, 188], [90, 178], [94, 172], [98, 164], [103, 170], [108, 162], [112, 158], [117, 163], [123, 154], [127, 156], [131, 149], [133, 160], [136, 162], [139, 172], [143, 160], [146, 168], [150, 158], [153, 172], [157, 171], [158, 184], [163, 180], [168, 174], [172, 184], [175, 186], [180, 177], [182, 190], [184, 206], [187, 212], [190, 221], [193, 210], [196, 214], [198, 202], [203, 190], [208, 204], [212, 191], [216, 207], [220, 215], [223, 209], [226, 219], [229, 217], [233, 230], [236, 252], [240, 274], [242, 276], [246, 258], [250, 265], [253, 270], [257, 258], [261, 277], [263, 260], [266, 238], [269, 244], [272, 211], [275, 216], [277, 220], [280, 228], [284, 211], [286, 218], [290, 222], [295, 217], [299, 224], [300, 210], [301, 184], [303, 195], [306, 204], [309, 216], [312, 230], [316, 242], [319, 228], [323, 236], [328, 230], [331, 240], [333, 252], [336, 245], [342, 244], [348, 252], [352, 266], [358, 271], [361, 257], [366, 256], [370, 243], [372, 239], [377, 247]], 0.83, 1.1);
add(m1, 'path', { d: 'M300.700 172V200', stroke: '#07a2d6', 'stroke-width': 1.3 });
add(m1, 'path', { d: 'M331.500 240V268M357.500 265V284M190.500 215V231', stroke: '#ad0e66' });
curve(m1, [[45, 50], [70, 66], [93, 85], [113, 102], [133, 119], [153, 135], [175, 150], [207, 170], [235, 186], [272, 209], [290, 222], [310, 230], [330, 233], [350, 235], [377, 239]], '#00e010', 1.4);
crosses(m1, [[7, 98], [65, 169], [68, 170], [87, 192], [92, 182], [131, 141], [136, 145], [150, 149], [168, 161], [180, 168], [182, 203], [186, 215], [190, 227], [195, 214], [204, 177], [206, 181], [210, 184], [212, 181], [236, 259], [240, 277], [242, 280], [246, 270], [249, 269], [251, 275], [253, 272], [260, 279], [262, 259], [273, 206], [278, 207], [284, 200], [286, 197], [295, 202], [301, 162], [306, 186], [332, 251], [352, 268], [355, 267], [358, 273]]);
var under = [[6, 325], [10, 336.5], [15, 336.5], [20, 336], [27, 331], [33, 332], [43, 331], [50, 332], [56, 333], [58, 345], [61, 358], [111, 358], [116, 355], [120, 348], [127, 345], [131, 341], [135, 344], [140, 347], [147, 346], [150, 343], [156, 344], [158, 348], [166, 349], [170, 345], [178, 346], [181, 344], [187, 354], [190, 358], [196, 358], [203, 345], [206, 343], [209, 344], [214, 341], [218, 346], [224, 348], [230, 350], [235, 358], [264, 358], [269, 348], [272, 336], [278, 330], [282, 330], [285, 325], [298, 325]];
var hump = [[298, 325], [301, 315], [305, 316], [309, 321], [311, 325]];
var tail = [[311, 325], [315, 334], [330, 334], [335, 340], [348, 341], [353, 348], [358, 349], [366, 343], [372, 333], [377, 332.5]];
area(m1, under, DOWN);
area(m1, hump, UP);
area(m1, tail, DOWN);
add(m1, 'path', { d: 'M' + under.concat(hump, tail).join('L'), fill: 'none', stroke: '#999', 'stroke-width': 0.8 });
hline(m1, 6, 377, 291.5, '#aaa', 1);
add(m1, 'path', { d: 'M326 56h4l-2 3z', fill: '#ffd91a' });
// scroll mark in the corner
add(m1, 'path', { d: 'M371 283h3M372.500 283v4M371 287h3', stroke: '#777', 'stroke-width': 0.7 });

// USDJPY M5
var m5 = document.getElementById('chart-m5');
hline(m5, 405, 777, 198, '#a01010', 0.8, '1.5 1.5');
hline(m5, 405, 777, 224, '#6a5a08', 1.6);
add(m5, 'path', { d: 'M443.500 56V358', stroke: '#888', 'stroke-dasharray': '1.5 1.5' });
curve(m5, [[405, 79], [411, 77], [450, 68], [497, 70], [515, 74], [545, 88], [570, 104], [600, 129], [625, 153], [650, 175], [675, 191], [700, 202], [740, 218], [777, 230]], '#999', 0.9);
curve(m5, [[405, 152], [411, 150], [450, 138], [497, 130], [520, 132], [545, 142], [570, 157], [600, 182], [620, 198], [640, 216], [660, 230], [675, 239], [713, 250], [745, 262], [777, 272]], '#999', 0.9);
curve(m5, [[405, 113], [450, 103], [497, 101], [525, 106], [555, 120], [575, 135], [600, 157], [625, 178], [655, 203], [676, 213], [700, 224], [740, 238], [777, 251]], '#a58a14', 0.9, '1.5 1.5');
candles(m5, [[405, 120], [412, 114], [495, 110], [502, 113], [507, 104], [511, 102], [514, 110], [517, 130], [520, 119], [525, 106], [528, 88], [533, 85], [538, 98], [545, 110], [550, 116], [553, 112], [558, 120], [563, 118], [569, 105], [572, 113], [574, 121], [580, 116], [586, 119], [591, 121], [593, 145], [595, 166], [597, 170], [600, 161], [602, 178], [605, 188], [612, 180], [621, 171], [630, 180], [637, 187], [642, 191], [645, 210], [650, 198], [655, 200], [661, 214], [663, 232], [665, 242], [670, 243], [675, 240], [679, 214], [685, 213], [690, 204], [694, 218], [699, 224], [702, 230], [707, 231], [713, 241], [718, 230], [725, 226], [730, 216], [738, 212], [743, 222], [748, 226], [753, 221], [756, 247], [762, 250], [764, 262], [767, 272], [770, 268], [777, 263]], 1.67, 1.7);
add(m5, 'path', { d: 'M688.500 185V205M752.500 200V225', stroke: '#087fa8' });
add(m5, 'path', { d: 'M595.500 165V187M713.500 235V256M755.500 240V265M516.500 125V148', stroke: '#ad0e66' });
curve(m5, [[405, 251], [443, 219], [478, 190], [503, 171], [533, 147], [563, 129], [600, 113], [620, 108], [645, 106.5], [670, 109], [700, 118], [740, 135], [777, 157]], '#00e010', 1.4);
crosses(m5, [[528, 67], [534, 72], [587, 109], [517, 142], [595, 179], [603, 193], [607, 189], [690, 182], [738, 194], [732, 199], [752, 188], [645, 216], [665, 255], [670, 248], [673, 240], [767, 283]]);
var bars = [[405, 292], [515, 292], [519, 297], [522, 297], [525, 292], [544, 292], [549, 299], [553, 302], [558, 308], [561, 309], [565, 308], [568, 305.5], [572, 309], [576, 313], [585, 313], [590, 316], [592, 325]];
var drop = [[592, 325], [595, 340], [599, 349], [603, 358], [777, 358]];
area(m5, bars, '#00a5dc');
area(m5, drop, '#d9127c');
var upBars = '';
var downBars = '';
for (var x = 406; x < 777; x += 3.34) {
    if (x < 592) {
        upBars += 'M' + x + ' 325V' + valueAt(bars, x);
    } else {
        downBars += 'M' + x + ' 325V' + valueAt(drop, x);
    }
}
add(m5, 'path', { d: upBars, stroke: '#087ba6' });
add(m5, 'path', { d: downBars, stroke: '#96105a' });
add(m5, 'path', { d: 'M' + bars.concat(drop).join('L'), fill: 'none', stroke: '#999', 'stroke-width': 0.8 });
add(m5, 'path', { d: 'M524 56V358', stroke: '#7a0a80', 'stroke-width': 2, opacity: 0.75 });
hline(m5, 405, 777, 291.5, '#aaa', 1);
add(m5, 'path', { d: 'M725 56h4l-2 3z', fill: '#ffd91a' });
add(m5, 'path', { d: 'M770 283h3M771.500 283v4M770 287h3', stroke: '#777', 'stroke-width': 0.7 });
```
